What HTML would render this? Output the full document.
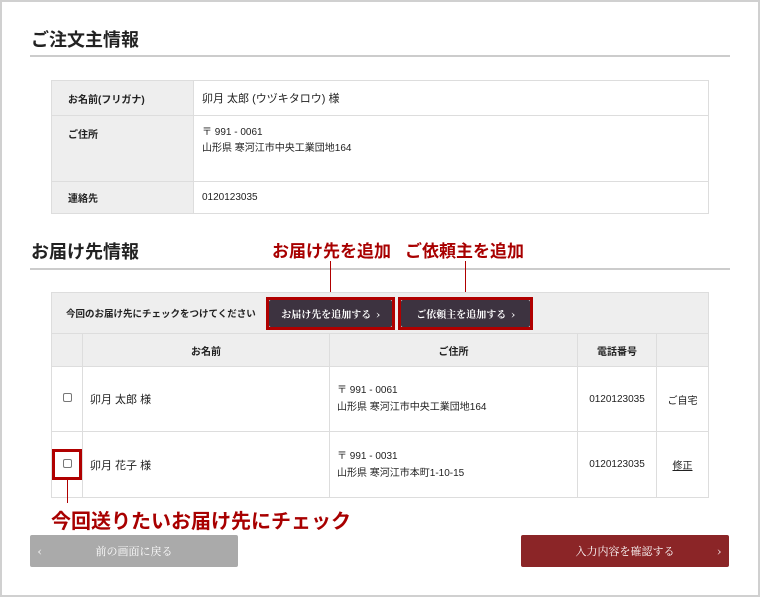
<!DOCTYPE html>
<html><head><meta charset="utf-8"><style>
*{box-sizing:border-box;margin:0;padding:0}
body{width:760px;height:597px;background:#fff;font-family:"Liberation Sans","Noto Sans CJK JP",sans-serif;color:#222;position:relative;overflow:hidden}
.frame{position:absolute;left:0;top:0;width:760px;height:597px;border:2px solid #d0d0d0}
.abs{position:absolute}
h2{position:absolute;font-size:18px;font-weight:bold;left:31px;color:#222}
.hr{position:absolute;left:30px;width:700px;height:2px;background:#ccc}
table{position:absolute;border-collapse:collapse;font-size:11px}
td,th{border:1px solid #ddd}
.t1 td.l{background:#eee;font-weight:bold;padding-left:16px;width:142px;font-size:10px}
.t1 td{padding-left:8px}
.red{color:#a80000;font-weight:bold}
.btn{position:absolute;background:#3d3340;color:#fff;font-size:10px;font-weight:bold;text-align:center;line-height:27px;border-radius:2px;font-family:"Noto Serif CJK SC",serif}
.rb{position:absolute;border:3px solid #b00000}
.cb{display:inline-block;width:9px;height:9px;border:1px solid #777;border-radius:2px}
.t2 th{background:#eee;font-size:10px;font-weight:bold}
.t2 td{font-size:11px}
</style></head><body>
<div class="frame"></div>
<h2 style="top:26px">ご注文主情報</h2>
<div class="hr" style="top:55px"></div>
<table class="t1" style="left:51px;top:80px;width:658px">
<tr style="height:35px"><td class="l">お名前(フリガナ)</td><td>卯月 太郎 (ウヅキタロウ) 様</td></tr>
<tr style="height:66px"><td class="l" style="vertical-align:top;padding-top:10px">ご住所</td><td style="vertical-align:top;padding-top:9px;font-size:10px;line-height:16px">〒 991 - 0061<br>山形県 寒河江市中央工業団地164</td></tr>
<tr style="height:32px"><td class="l">連絡先</td><td style="font-size:10px">0120123035</td></tr>
</table>
<h2 style="top:238px">お届け先情報</h2>
<div class="hr" style="top:268px"></div>
<div class="abs red" style="left:272px;top:237px;font-size:17px">お届け先を追加</div>
<div class="abs red" style="left:405px;top:237px;font-size:17px">ご依頼主を追加</div>
<div class="abs" style="left:330px;top:261px;width:1px;height:36px;background:#b00000"></div>
<div class="abs" style="left:465px;top:261px;width:1px;height:36px;background:#b00000"></div>
<table class="t2" style="left:51px;top:292px;width:658px">
<tr style="height:41px"><th colspan="5" style="text-align:left;padding-left:14px;font-size:9.5px">今回のお届け先にチェックをつけてください</th></tr>
<tr style="height:33px"><th style="width:31px"></th><th style="width:247px">お名前</th><th style="width:248px">ご住所</th><th style="width:79px">電話番号</th><th></th></tr>
<tr style="height:65px"><td style="text-align:center"><span class="cb"></span></td><td style="padding-left:7px">卯月 太郎 様</td><td style="padding-left:7px;font-size:10px;line-height:17px">〒 991 - 0061<br>山形県 寒河江市中央工業団地164</td><td style="text-align:center;font-size:10px">0120123035</td><td style="text-align:center;font-size:10px">ご自宅</td></tr>
<tr style="height:66px"><td style="text-align:center"><span class="cb"></span></td><td style="padding-left:7px">卯月 花子 様</td><td style="padding-left:7px;font-size:10px;line-height:17px">〒 991 - 0031<br>山形県 寒河江市本町1-10-15</td><td style="text-align:center;font-size:10px">0120123035</td><td style="text-align:center;font-size:10px;text-decoration:underline">修正</td></tr>
</table>
<div class="rb" style="left:266px;top:297px;width:129px;height:33px"></div>
<div class="btn" style="left:269px;top:300px;width:123px;height:27px">お届け先を追加する &nbsp;›</div>
<div class="rb" style="left:398px;top:297px;width:135px;height:33px"></div>
<div class="btn" style="left:401px;top:300px;width:129px;height:27px">ご依頼主を追加する &nbsp;›</div>
<div class="rb" style="left:52px;top:449px;width:30px;height:31px"></div>
<div class="abs" style="left:67px;top:480px;width:1px;height:23px;background:#b00000"></div>
<div class="abs red" style="left:51px;top:505px;font-size:20px">今回送りたいお届け先にチェック</div>
<div class="abs" style="left:30px;top:535px;width:208px;height:32px;background:#aaa;border-radius:2px;color:#fff;font-size:11px;line-height:32px;text-align:center;font-family:'Noto Serif CJK SC',serif"><span style="position:absolute;left:8px">‹</span>前の画面に戻る</div>
<div class="abs" style="left:521px;top:535px;width:208px;height:32px;background:#8b2527;border-radius:2px;color:#fff;font-size:11px;line-height:32px;text-align:center;font-family:'Noto Serif CJK SC',serif">入力内容を確認する<span style="position:absolute;right:8px">›</span></div>
</body></html>
